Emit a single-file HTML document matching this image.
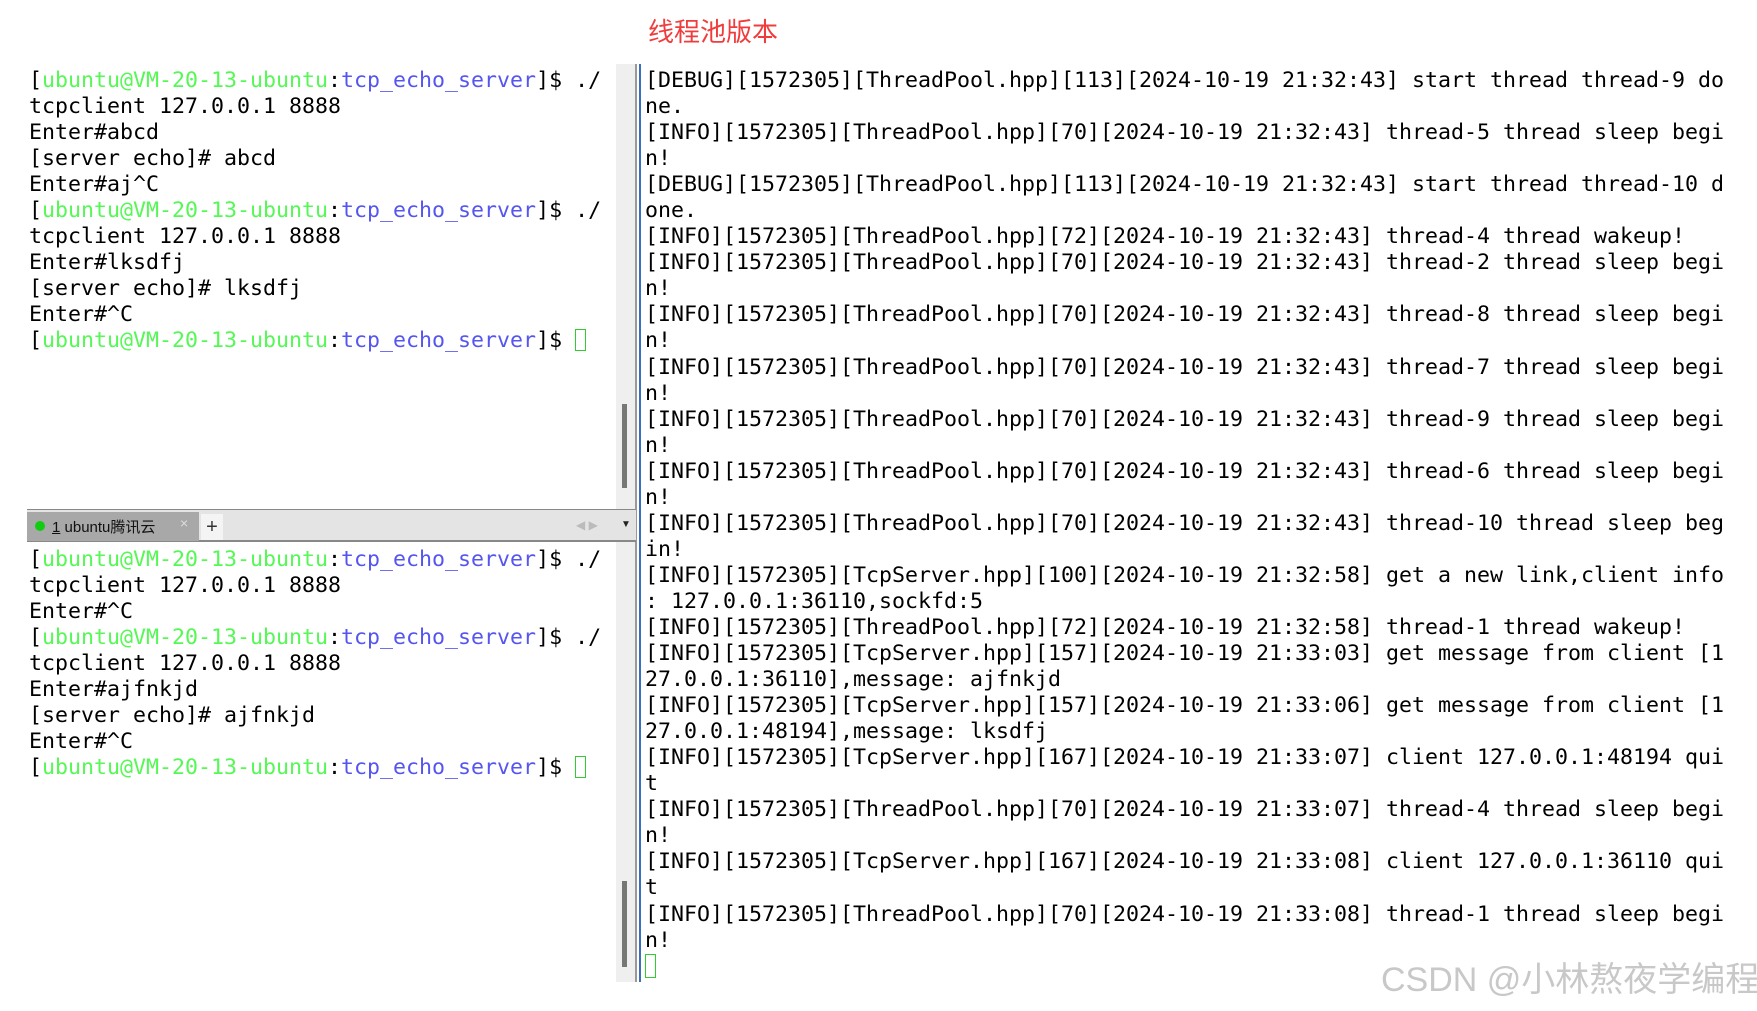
<!DOCTYPE html>
<html><head><meta charset="utf-8"><style>
body{margin:0;width:1757px;height:1011px;background:#fff;position:relative;overflow:hidden;font-family:"DejaVu Sans Mono","Liberation Mono",monospace;}
.t{position:absolute;white-space:pre;font-size:21.6px;line-height:26.05px;color:#000;}
.g{color:#55f855}.b{color:#5555f0}
.cur{display:inline-block;width:11px;height:22px;border:1.5px solid #3c3;vertical-align:-4px;box-sizing:border-box}
</style></head><body>
<div style="position:absolute;left:648px;top:12px;font:26px 'Noto Sans CJK SC',sans-serif;color:#f03c3c;">线程池版本</div>
<div style="position:absolute;left:616px;top:64px;width:20px;height:918px;background:#efefef"></div>
<div style="position:absolute;left:622px;top:404px;width:5px;height:84px;background:#777"></div>
<div style="position:absolute;left:622px;top:881px;width:5px;height:86px;background:#777"></div>
<div style="position:absolute;left:635px;top:64px;width:2px;height:918px;background:#999"></div>
<div style="position:absolute;left:639px;top:64px;width:2px;height:918px;background:#3a6fc0"></div>
<div style="position:absolute;left:27px;top:509px;width:609px;height:33px;background:#e4e4e4;border-top:1px solid #888;border-bottom:2px solid #888;box-sizing:border-box"></div>
<div style="position:absolute;left:27px;top:512px;width:172px;height:29px;background:#a8a8a8"></div>
<div style="position:absolute;left:35px;top:521px;width:10px;height:10px;border-radius:50%;background:#1c1"></div>
<div style="position:absolute;left:52px;top:516px;font:15px 'Liberation Sans','Noto Sans CJK SC',sans-serif;color:#111"><u>1</u> ubuntu腾讯云</div>
<div style="position:absolute;left:180px;top:515px;font:14px sans-serif;color:#ddd">×</div>
<div style="position:absolute;left:201px;top:514px;width:22px;height:26px;background:#f4f4f4;font:20px sans-serif;text-align:center;line-height:26px;color:#333">+</div>
<div style="position:absolute;left:576px;top:518px;font:12px sans-serif;color:#bbb">◀ ▶</div>
<div style="position:absolute;left:621px;top:519px;font:10px sans-serif;color:#222">▼</div>
<div class="t" style="left:29px;top:68px">[<span class="g">ubuntu@VM-20-13-ubuntu</span>:<span class="b">tcp_echo_server</span>]$ ./
tcpclient 127.0.0.1 8888
Enter#abcd
[server echo]# abcd
Enter#aj^C
[<span class="g">ubuntu@VM-20-13-ubuntu</span>:<span class="b">tcp_echo_server</span>]$ ./
tcpclient 127.0.0.1 8888
Enter#lksdfj
[server echo]# lksdfj
Enter#^C
[<span class="g">ubuntu@VM-20-13-ubuntu</span>:<span class="b">tcp_echo_server</span>]$ <span class="cur"></span></div>
<div class="t" style="left:29px;top:547px">[<span class="g">ubuntu@VM-20-13-ubuntu</span>:<span class="b">tcp_echo_server</span>]$ ./
tcpclient 127.0.0.1 8888
Enter#^C
[<span class="g">ubuntu@VM-20-13-ubuntu</span>:<span class="b">tcp_echo_server</span>]$ ./
tcpclient 127.0.0.1 8888
Enter#ajfnkjd
[server echo]# ajfnkjd
Enter#^C
[<span class="g">ubuntu@VM-20-13-ubuntu</span>:<span class="b">tcp_echo_server</span>]$ <span class="cur"></span></div>
<div class="t" style="left:645px;top:68px">[DEBUG][1572305][ThreadPool.hpp][113][2024-10-19 21:32:43] start thread thread-9 do
ne.
[INFO][1572305][ThreadPool.hpp][70][2024-10-19 21:32:43] thread-5 thread sleep begi
n!
[DEBUG][1572305][ThreadPool.hpp][113][2024-10-19 21:32:43] start thread thread-10 d
one.
[INFO][1572305][ThreadPool.hpp][72][2024-10-19 21:32:43] thread-4 thread wakeup!
[INFO][1572305][ThreadPool.hpp][70][2024-10-19 21:32:43] thread-2 thread sleep begi
n!
[INFO][1572305][ThreadPool.hpp][70][2024-10-19 21:32:43] thread-8 thread sleep begi
n!
[INFO][1572305][ThreadPool.hpp][70][2024-10-19 21:32:43] thread-7 thread sleep begi
n!
[INFO][1572305][ThreadPool.hpp][70][2024-10-19 21:32:43] thread-9 thread sleep begi
n!
[INFO][1572305][ThreadPool.hpp][70][2024-10-19 21:32:43] thread-6 thread sleep begi
n!
[INFO][1572305][ThreadPool.hpp][70][2024-10-19 21:32:43] thread-10 thread sleep beg
in!
[INFO][1572305][TcpServer.hpp][100][2024-10-19 21:32:58] get a new link,client info
: 127.0.0.1:36110,sockfd:5
[INFO][1572305][ThreadPool.hpp][72][2024-10-19 21:32:58] thread-1 thread wakeup!
[INFO][1572305][TcpServer.hpp][157][2024-10-19 21:33:03] get message from client [1
27.0.0.1:36110],message: ajfnkjd
[INFO][1572305][TcpServer.hpp][157][2024-10-19 21:33:06] get message from client [1
27.0.0.1:48194],message: lksdfj
[INFO][1572305][TcpServer.hpp][167][2024-10-19 21:33:07] client 127.0.0.1:48194 qui
t
[INFO][1572305][ThreadPool.hpp][70][2024-10-19 21:33:07] thread-4 thread sleep begi
n!
[INFO][1572305][TcpServer.hpp][167][2024-10-19 21:33:08] client 127.0.0.1:36110 qui
t
[INFO][1572305][ThreadPool.hpp][70][2024-10-19 21:33:08] thread-1 thread sleep begi
n!
<span class="cur" style="height:24px"></span></div>
<div style="position:absolute;left:1381px;top:952px;font:34px 'Liberation Sans','Noto Sans CJK SC',sans-serif;color:#c8c8c8;white-space:nowrap">CSDN @小林熬夜学编程</div>
</body></html>
